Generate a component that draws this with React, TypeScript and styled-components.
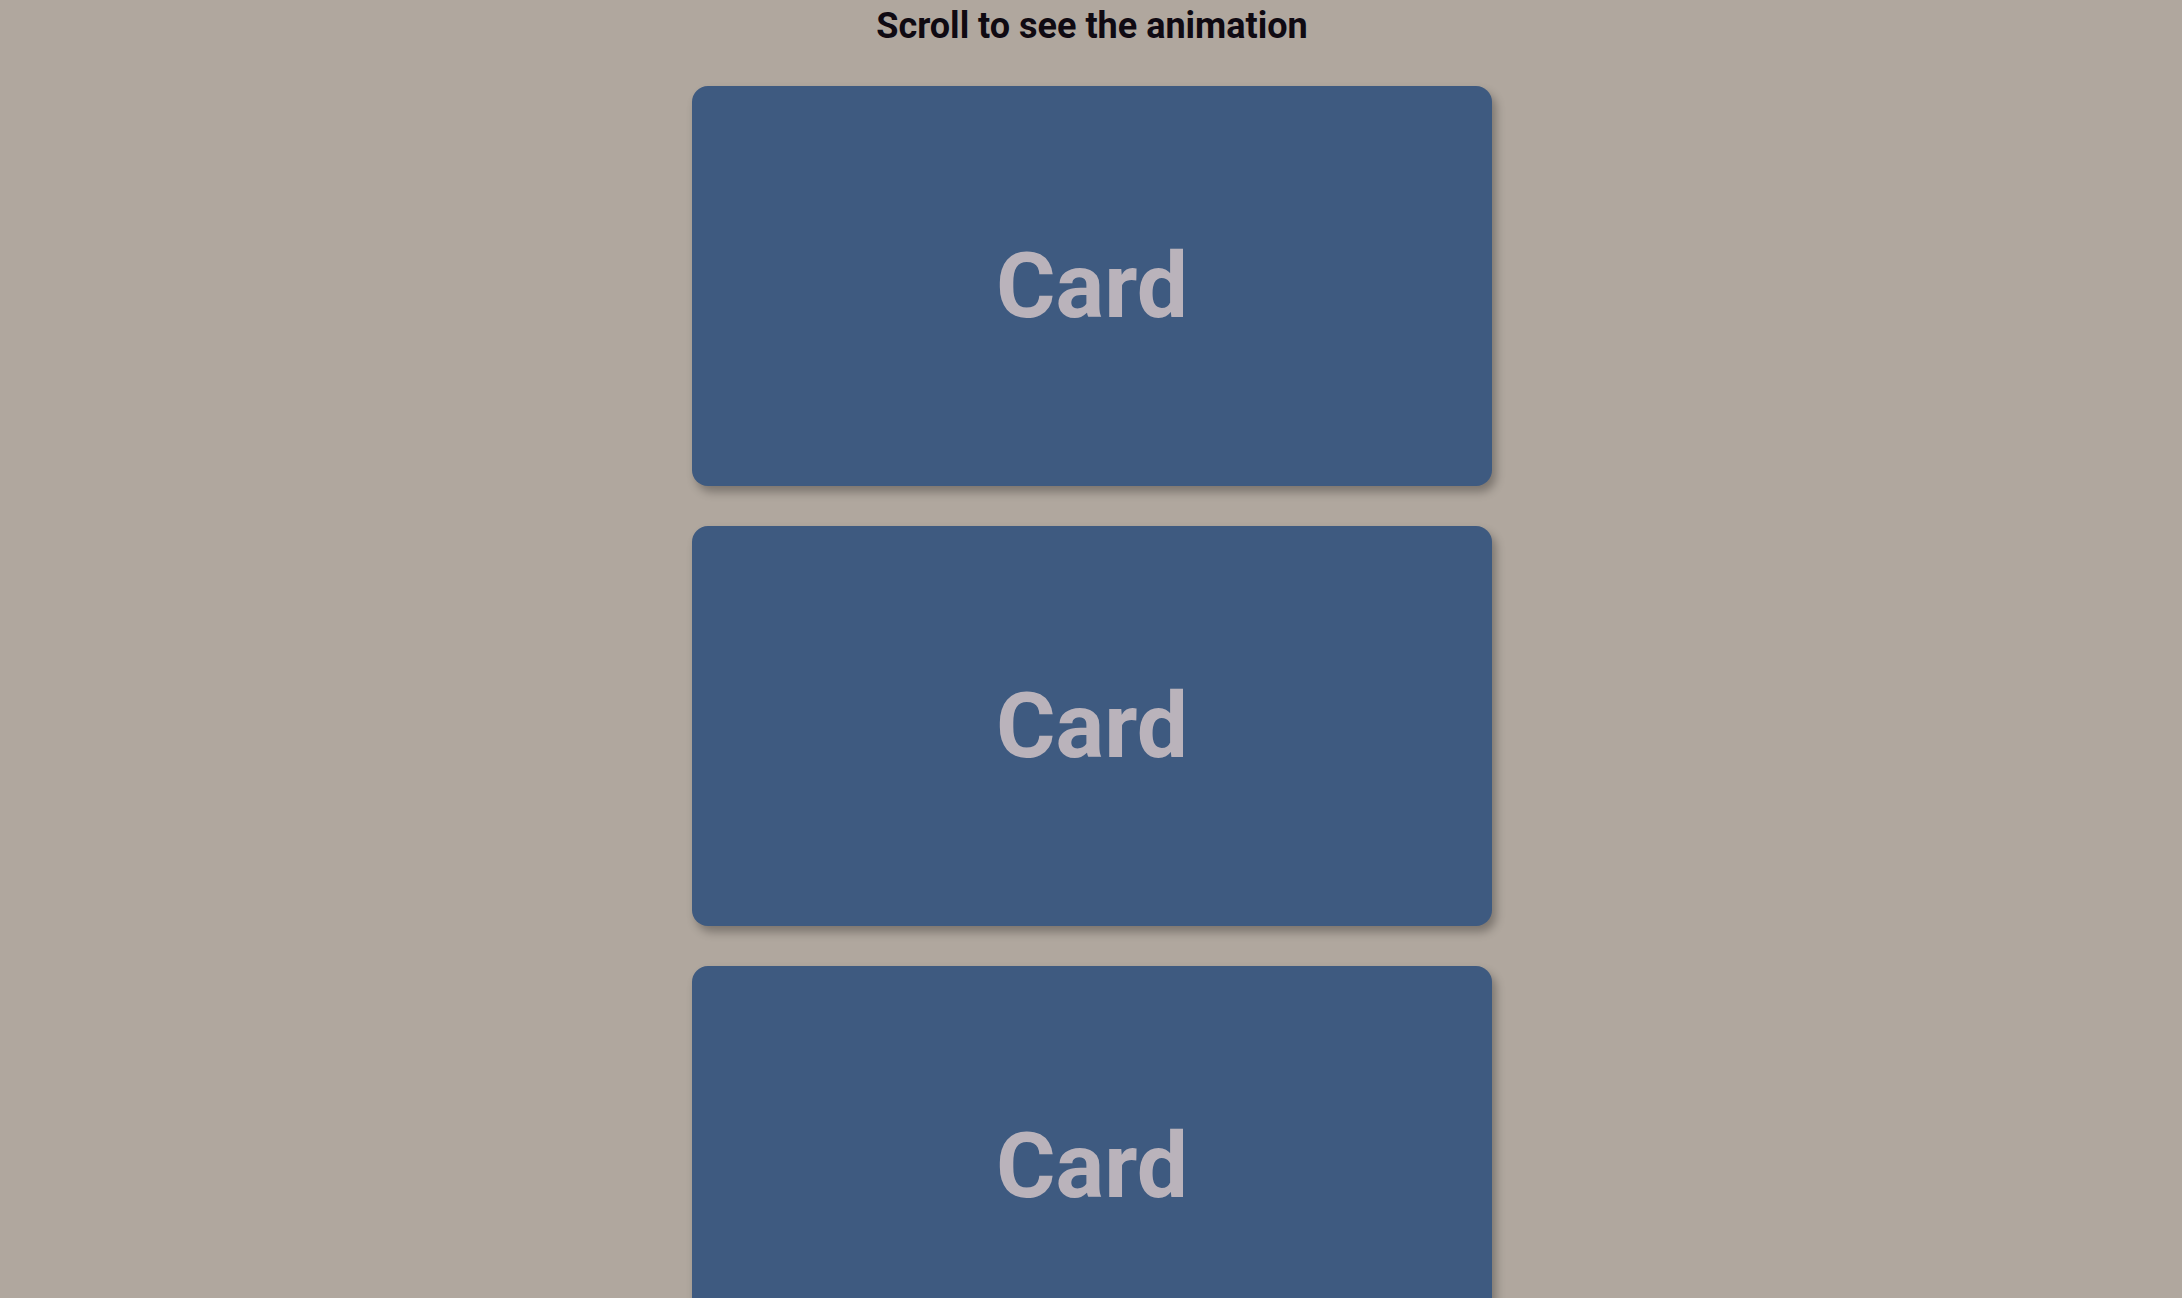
import React from 'react';
import styled, { createGlobalStyle } from 'styled-components';

const GlobalStyle = createGlobalStyle`
  body {
    margin: 0;
    background: #b0a79e;
    font-family: Roboto, "Liberation Sans", sans-serif;
  }
`;

const Page = styled.main`
  display: flex;
  flex-direction: column;
  align-items: center;
  padding-left: 2px;
  height: 1298px;
  overflow: hidden;
`;

const Title = styled.h1`
  margin: 0;
  font-size: 36px;
  line-height: 52px;
  font-weight: 700;
  color: #0f0a12;
`;

const CardList = styled.div`
  display: flex;
  flex-direction: column;
  gap: 40px;
  padding-top: 34px;
`;

const Card = styled.div`
  width: 800px;
  height: 400px;
  flex-shrink: 0;
  border-radius: 16px;
  background: #3e5a80;
  box-shadow: 4px 6px 10px rgba(0, 0, 0, 0.3);
  display: flex;
  align-items: center;
  justify-content: center;
  font-size: 91px;
  font-weight: 700;
  color: #bab3bb;
`;

const cards = ['Card', 'Card', 'Card'];

const App: React.FC = () => {
  return (
    <>
      <GlobalStyle />
      <Page>
        <Title>Scroll to see the animation</Title>
        <CardList>
          {cards.map((label, index) => (
            <Card key={index}>{label}</Card>
          ))}
        </CardList>
      </Page>
    </>
  );
};

export default App;
